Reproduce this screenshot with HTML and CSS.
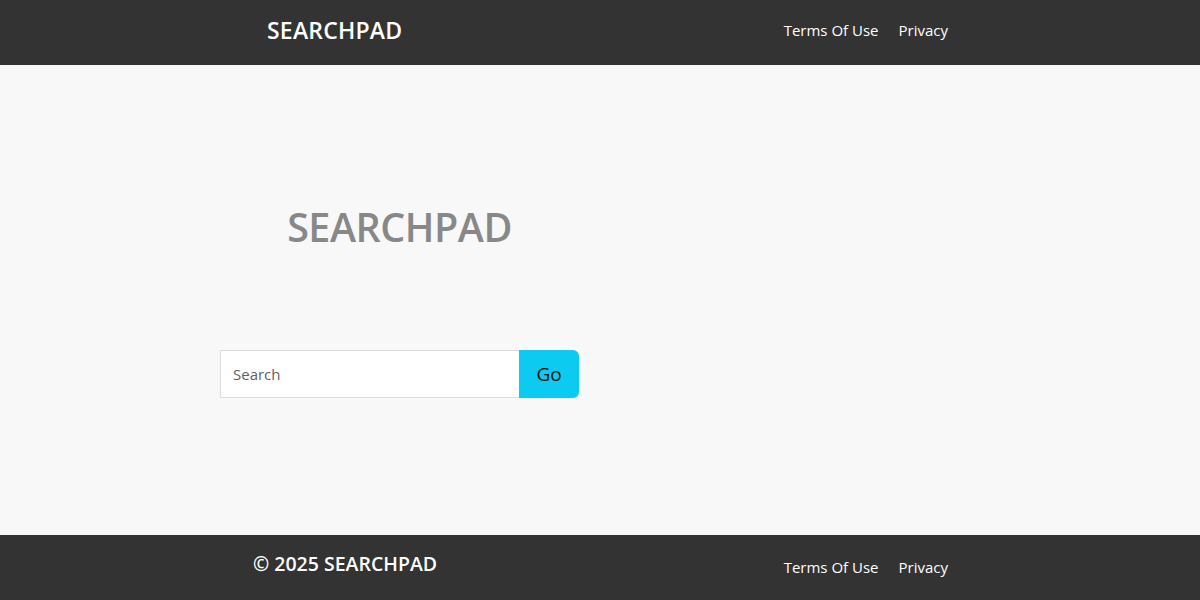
FILE: index.html
```html
<!DOCTYPE html>
<html lang="en">
<head>
<meta charset="utf-8">
<title>SearchPad</title>
<link rel="stylesheet" href="styles.css">
</head>
<body>
<header class="topbar">
  <div class="container">
    <a class="brand" href="#">SEARCHPAD</a>
    <nav class="links">
      <a href="#">Terms Of Use</a>
      <a href="#">Privacy</a>
    </nav>
  </div>
</header>
<main class="hero">
  <div class="hero-inner">
    <h1 class="title">SEARCHPAD</h1>
    <form class="search">
      <input class="search-input" type="text" placeholder="Search">
      <button class="search-btn" type="button">Go</button>
    </form>
  </div>
</main>
<footer class="bottombar">
  <div class="container">
    <span class="copy">© 2025 SEARCHPAD</span>
    <nav class="links links-footer">
      <a href="#">Terms Of Use</a>
      <a href="#">Privacy</a>
    </nav>
  </div>
</footer>
</body>
</html>
```

FILE: styles.css
```css
* { box-sizing: border-box; }
html, body { margin: 0; padding: 0; }
body {
  font-family: "Open Sans", "Noto Sans", "Liberation Sans", sans-serif;
  background: #f8f8f8;
  height: 600px;
  display: flex;
  flex-direction: column;
}
.topbar, .bottombar {
  background: #333333;
  height: 65px;
  flex: 0 0 65px;
}
.container {
  width: 720px;
  margin: 0 auto;
  height: 100%;
  padding: 0 12px 5px;
  display: flex;
  align-items: center;
  justify-content: space-between;
}
.bottombar .container { padding-bottom: 8px; }
.brand {
  color: #fff;
  text-decoration: none;
  font-weight: 600;
  font-size: 23px;
  padding-left: 15px;
  letter-spacing: 0.2px;
}
.links { display: flex; gap: 20px; }
.links a {
  color: #fff;
  text-decoration: none;
  font-size: 15px;
}
.links-footer { padding-top: 6px; }
.copy {
  color: #fff;
  font-weight: 600;
  font-size: 19.5px;
  padding-left: 1px;
}
.hero {
  flex: 1 1 auto;
  background: #f8f8f8;
}
.hero-inner {
  width: 359px;
  margin-left: 220px;
  padding-top: 132px;
}
.title {
  margin: 0;
  text-align: center;
  color: #888888;
  font-size: 39.5px;
  font-weight: 600;
  line-height: 60px;
  letter-spacing: -0.5px;
}
.search {
  display: flex;
  margin-top: 93px;
  height: 48px;
}
.search-input {
  flex: 1 1 auto;
  min-width: 0;
  height: 48px;
  border: 1px solid #dddddd;
  border-right: none;
  background: #fff;
  padding: 0 12px;
  font-family: inherit;
  font-size: 15px;
  color: #555;
  outline: none;
}
.search-input::placeholder { color: #5f5f5f; }
.search-btn {
  width: 60px;
  height: 48px;
  border: none;
  background: #0dcaf0;
  color: #111;
  font-family: inherit;
  font-size: 19px;
  border-radius: 0 6px 6px 0;
  padding: 0;
}
```
